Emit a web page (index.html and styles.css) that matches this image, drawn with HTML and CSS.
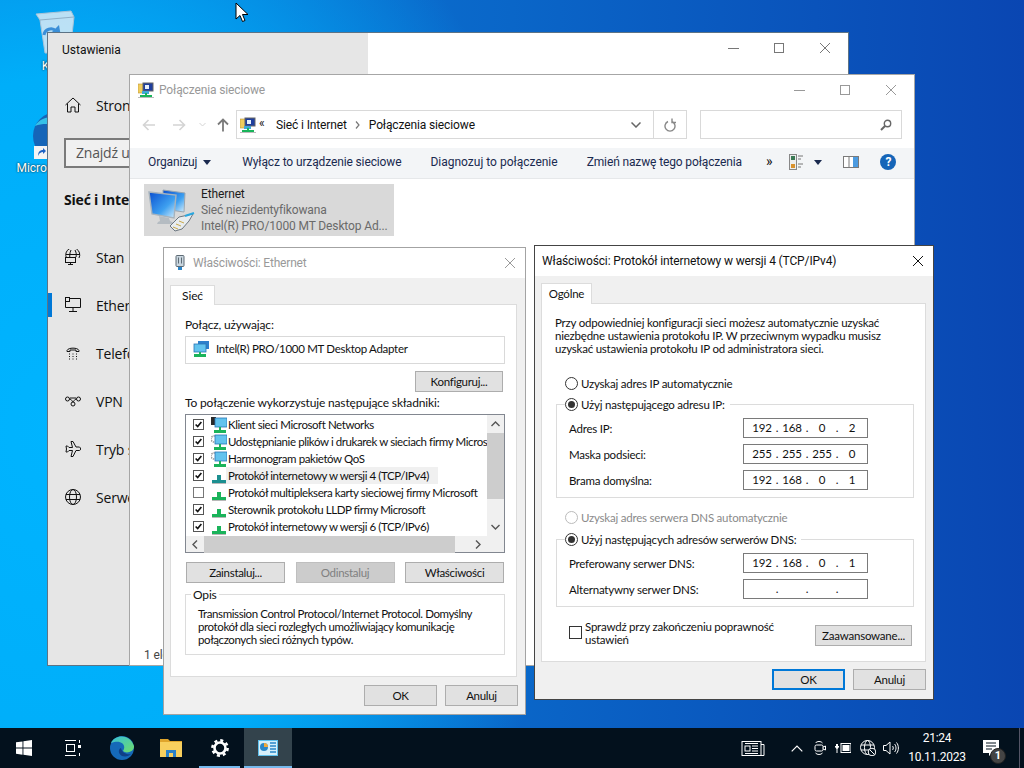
FILE: index.html
```html
<!DOCTYPE html>
<html lang="pl">
<head>
<meta charset="utf-8">
<title>Właściwości protokołu</title>
<link rel="stylesheet" href="styles.css">
</head>
<body>
<svg class="defs" width="0" height="0">
  <defs>
    <symbol id="netfolder" viewBox="0 0 16 16">
      <path d="M0 2h7l1 1v8H0z" fill="#f2cd5c" stroke="#b8933a" stroke-width=".6"/>
      <rect x="5" y="1" width="10" height="8" fill="#1f3f9e" stroke="#666" stroke-width="1"/>
      <rect x="7" y="3" width="4" height="4" fill="#e8f0fa"/>
      <rect x="4" y="9" width="7" height="3" fill="#3fa8d8"/>
      <rect x="7" y="11" width="2" height="2" fill="#18b45a"/>
      <rect x="2" y="13" width="12" height="2" fill="#18b45a"/>
      <rect x="0" y="15" width="16" height="1" fill="#bbb"/>
    </symbol>
    <symbol id="x" viewBox="0 0 12 12"><path d="M1 1l10 10M11 1L1 11" fill="none" stroke="currentColor" stroke-width="1"/></symbol>
    <symbol id="comp" viewBox="0 0 16 16">
      <rect x="5" y="0" width="11" height="8" fill="#2d80cc"/>
      <rect x="1" y="3" width="12" height="8" fill="#62c3ee" stroke="#2a76b5" stroke-width=".8"/>
      <rect x="6" y="11" width="2" height="2" fill="#1ab35a"/>
      <rect x="1" y="13" width="12" height="3" fill="#1ab35a"/>
    </symbol>
    <symbol id="client" viewBox="0 0 16 16">
      <rect x="0" y="0" width="5" height="8" fill="#2a2a2a"/>
      <rect x="4" y="1" width="12" height="9" fill="#62c3ee" stroke="#2a76b5" stroke-width=".8"/>
      <rect x="8" y="10" width="2" height="3" fill="#1ab35a"/>
      <rect x="3" y="13" width="12" height="3" fill="#1ab35a"/>
    </symbol>
    <symbol id="share" viewBox="0 0 16 16">
      <circle cx="3" cy="5" r="3" fill="none" stroke="#9a9a9a" stroke-width="1.6" stroke-dasharray="1.4 .8"/>
      <rect x="4" y="1" width="12" height="9" fill="#62c3ee" stroke="#2a76b5" stroke-width=".8"/>
      <rect x="8" y="10" width="2" height="3" fill="#1ab35a"/>
      <rect x="3" y="13" width="12" height="3" fill="#1ab35a"/>
    </symbol>
    <symbol id="proto" viewBox="0 0 16 16">
      <rect x="6" y="7" width="4" height="5" fill="#1ab35a"/>
      <rect x="1" y="12" width="14" height="3" fill="#1ab35a"/>
      <rect x="1" y="15" width="14" height="1" fill="#b8b8b8"/>
    </symbol>
    <symbol id="protoA" viewBox="0 0 16 16">
      <rect x="6" y="7" width="4" height="5" fill="#1c8f90"/>
      <rect x="1" y="12" width="14" height="3" fill="#1c8f90"/>
      <rect x="1" y="15" width="14" height="1" fill="#b8b8b8"/>
    </symbol>
    <symbol id="tick" viewBox="0 0 11 11"><path d="M2 5.5l2.5 2.5L9 2.5" fill="none" stroke="#111" stroke-width="2"/></symbol>
  </defs>
</svg>

<div class="desk-icon bin">
  <svg width="40" height="48" viewBox="0 0 40 48">
    <path d="M1 6L36 3l3 6-4 36H10L5 12z" fill="#dcebf5" fill-opacity=".85" stroke="#a9c4d8"/>
    <path d="M5 12l34-3" stroke="#8fb0c8" fill="none"/>
    <path d="M9 27a7 7 0 0 1 12-4l-3 2 6 1-1-6-2 2M24 32a7 7 0 0 1-11 2" fill="none" stroke="#3a8fd8" stroke-width="3"/>
  </svg>
  <span class="desk-label">Kosz</span>
</div>
<div class="desk-icon edge">
  <svg width="48" height="48" viewBox="0 0 48 48">
    <circle cx="24" cy="24" r="24" fill="#1565b8"/>
    <path d="M2 14C10 0 40 0 46 24c0 8-10 10-16 6 6-14-12-22-28-16z" fill="#35c1e8"/>
    <rect x="1" y="34" width="13" height="13" fill="#f4f4f4"/>
    <path d="M5 44c0-4 2-6 5-6V36l3 3-3 3v-2c-2 0-4 1-5 4z" fill="#1c62c4"/>
  </svg>
  <span class="desk-label">Microsoft Edge</span>
</div>

<section class="win settings">
  <div class="set-pane">
    <div class="set-title">Ustawienia</div>
    <div class="set-home">
      <svg class="set-ico" width="16" height="16" viewBox="0 0 16 16"><path d="M.5 8L8 1l7.5 7M2.500 6.500V15H6v-5h4v5h3.500V6.500" fill="none" stroke="#111" stroke-width="1"/></svg>
      <span>Strona główna</span>
    </div>
    <div class="set-search">Znajdź ustawienie</div>
    <h2 class="set-head">Sieć i Internet</h2>
    <nav class="set-nav">
      <div class="set-row"><i class="mark"></i>
        <svg class="set-ico" width="16" height="16" viewBox="0 0 16 16"><g fill="none" stroke="#111"><path d="M3 11A7 7 0 1 1 14 9"/><path d="M1 5.500h14M6 1c-1.500 3-1.500 7-1 9M10 1c1.500 3 1.500 5 1 7"/><rect x=".5" y="8.500" width="10" height="5" fill="#e6e6e6"/><path d="M3 15.500h5M5.500 13.500v2"/></g></svg>
        <span>Stan</span></div>
      <div class="set-row"><i class="mark on"></i>
        <svg class="set-ico" width="16" height="16" viewBox="0 0 16 16"><g fill="none" stroke="#111"><path d="M4.500 1.500h11v9H.5V5"/><rect x=".5" y=".5" width="4" height="4"/><path d="M8 10.500v4M4 14.500h8"/></g></svg>
        <span>Ethernet</span></div>
      <div class="set-row"><i class="mark"></i>
        <svg class="set-ico" width="16" height="16" viewBox="0 0 16 16"><path d="M2 6.500C1 2 15 2 14 6.500h-3V5H5v1.500z" fill="none" stroke="#111"/><path d="M4 9h1M7.500 9h1M11 9h1M4 11.500h1M7.500 11.500h1M11 11.500h1M4 14h1M7.500 14h1M11 14h1" stroke="#111"/></svg>
        <span>Telefoniczne</span></div>
      <div class="set-row"><i class="mark"></i>
        <svg class="set-ico" width="16" height="16" viewBox="0 0 16 16"><g fill="none" stroke="#111"><circle cx="2.500" cy="6" r="2"/><circle cx="13.500" cy="6" r="2"/><circle cx="8" cy="11" r="2"/><path d="M4.500 6C7 6 7 9 8 9M11.500 6C9 6 9 9 8 9M5 5h6"/></g></svg>
        <span>VPN</span></div>
      <div class="set-row"><i class="mark"></i>
        <svg class="set-ico" width="16" height="16" viewBox="0 0 16 16"><path d="M6 .5h2L11 6h3.500c1.500 1 1.500 3 0 3.500H11l-3 6H6l1.500-6H4L2.500 11H1l.5-3L1 5h1.500L4 6.500h3.500z" fill="none" stroke="#111"/></svg>
        <span>Tryb samolotowy</span></div>
      <div class="set-row"><i class="mark"></i>
        <svg class="set-ico" width="16" height="16" viewBox="0 0 16 16"><g fill="none" stroke="#111"><circle cx="8" cy="8" r="7.500"/><ellipse cx="8" cy="8" rx="3.500" ry="7.500"/><path d="M1 5.500h14M1 10.500h14"/></g></svg>
        <span>Serwer proxy</span></div>
    </nav>
  </div>
  <div class="set-main">
    <div class="caption-btns dark">
      <span class="cb"><i class="cb-min"></i></span>
      <span class="cb"><i class="cb-max"></i></span>
      <span class="cb"><svg width="12" height="12"><use href="#x"/></svg></span>
    </div>
  </div>
</section>

<section class="win conn">
  <header class="conn-title">
    <svg class="i16" width="16" height="16"><use href="#netfolder"/></svg>
    <span class="conn-title-text">Połączenia sieciowe</span>
    <div class="caption-btns">
      <span class="cb"><i class="cb-min"></i></span>
      <span class="cb"><i class="cb-max"></i></span>
      <span class="cb"><svg width="12" height="12"><use href="#x"/></svg></span>
    </div>
  </header>
  <div class="addr-row">
    <div class="nav-btns">
      <svg class="nb back" width="14" height="12" viewBox="0 0 14 12"><path d="M13 6H2M6.500 1L1.500 6l5 5" fill="none" stroke="#d4d4d4" stroke-width="1.600"/></svg>
      <svg class="nb fwd" width="14" height="12" viewBox="0 0 14 12"><path d="M1 6h11M7.500 1l5 5-5 5" fill="none" stroke="#d4d4d4" stroke-width="1.600"/></svg>
      <svg class="nb drop" width="7" height="5" viewBox="0 0 7 5"><path d="M.5 1L3.500 4l3-3" fill="none" stroke="#d4d4d4"/></svg>
      <svg class="nb up" width="12" height="14" viewBox="0 0 12 14"><path d="M6 13.500V2M1 6.500l5-5 5 5" fill="none" stroke="#7a7a7a" stroke-width="1.800"/></svg>
    </div>
    <div class="addr">
      <svg class="i16 addr-ico" width="16" height="16"><use href="#netfolder"/></svg>
      <span class="addr-lq">«</span>
      <span class="addr-crumb">Sieć i Internet</span>
      <svg class="addr-sep" width="5" height="8" viewBox="0 0 5 8"><path d="M1 .5L4 4 1 7.500" fill="none" stroke="#777" stroke-width="1.200"/></svg>
      <span class="addr-crumb">Połączenia sieciowe</span>
      <svg class="addr-chev" width="10" height="6" viewBox="0 0 10 6"><path d="M.5 .5L5 5 9.500 .5" fill="none" stroke="#666" stroke-width="1.500"/></svg>
      <span class="addr-refresh">
        <svg width="12" height="14" viewBox="0 0 12 14"><path d="M4 3.500a5 5 0 1 0 4 0M8 .5v4h4" fill="none" stroke="#888" stroke-width="1.400"/></svg>
      </span>
    </div>
    <div class="search">
      <svg width="12" height="12" viewBox="0 0 12 12"><circle cx="7.500" cy="4.500" r="3.200" fill="none" stroke="#666" stroke-width="1.400"/><path d="M5 7l-4 4" stroke="#666" stroke-width="2"/></svg>
    </div>
  </div>
  <div class="toolbar">
    <span class="tb t1">Organizuj</span>
    <i class="tri t1a"></i>
    <span class="tb t2">Wyłącz to urządzenie sieciowe</span>
    <span class="tb t3">Diagnozuj to połączenie</span>
    <span class="tb t4">Zmień nazwę tego połączenia</span>
    <span class="tb t5">»</span>
    <svg class="t6" width="15" height="16" viewBox="0 0 15 16"><rect x=".5" y=".5" width="7" height="15" fill="#eee" stroke="#888"/><rect x="2" y="2" width="4" height="4" fill="#3b7a55"/><rect x="2" y="10" width="4" height="4" fill="#d9922e"/><path d="M9 2h5M9 5h3M9 10h5M9 13h3" stroke="#777"/></svg>
    <i class="tri t7"></i>
    <svg class="t8" width="16" height="12" viewBox="0 0 16 12"><rect x=".5" y=".5" width="15" height="11" fill="#fff" stroke="#7a7a7a"/><rect x="10" y="1" width="5" height="10" fill="#4c9be0"/><path d="M6 1v10" stroke="#7a7a7a"/></svg>
    <span class="help">?</span>
  </div>
  <div class="conn-item">
    <svg class="big" width="48" height="46" viewBox="0 0 48 46">
      <defs>
        <linearGradient id="scr" x1="0" y1="0" x2="1" y2="1"><stop offset="0" stop-color="#0a4fd0"/><stop offset=".6" stop-color="#3ea0f0"/><stop offset="1" stop-color="#d9effc"/></linearGradient>
      </defs>
      <path d="M15 3l22 3-1 19-21-3z" fill="url(#scr)" stroke="#9aa7b2"/>
      <path d="M1 5l27 3-2 23L4 27z" fill="url(#scr)" stroke="#a7b3bd" stroke-width="1.400"/>
      <path d="M11 29l10 2 1 3 4 2-1 1H9l1-2 2-1z" fill="#b5bcc2"/>
      <path d="M22 39l9-9 14-3-4 7-7 8-7 2z" fill="#e8edf0" stroke="#6d7780"/>
      <path d="M25 40l5 2M28 37l5 2M31 34l5 2" stroke="#c9a94a"/>
      <path d="M37 29l9-3" stroke="#2aa8e0" stroke-width="2"/>
    </svg>
    <div class="conn-text">
      <div class="conn-name">Ethernet</div>
      <div class="conn-sub">Sieć niezidentyfikowana</div>
      <div class="conn-sub">Intel(R) PRO/1000 MT Desktop Ad...</div>
    </div>
  </div>
  <div class="conn-status">1 element</div>
</section>

<section class="win dlg props">
  <header class="dlg-title">
    <svg class="plug" width="10" height="16" viewBox="0 0 10 16"><rect x="1" y="0.500" width="8" height="11" rx="1" fill="#c9d6df" stroke="#5e6b75"/><path d="M3.500 2.500v6M6.500 2.500v6" stroke="#5e6b75"/><rect x="3" y="12" width="4" height="3" fill="#2a84c8"/></svg>
    <span class="dlg-title-text dim">Właściwości: Ethernet</span>
    <svg class="dlg-x dim" width="12" height="12"><use href="#x"/></svg>
  </header>
  <div class="tabs"><span class="tab tab-a">Sieć</span></div>
  <div class="panel panel-a">
    <div class="lbl-1">Połącz, używając:</div>
    <div class="adapter">
      <svg width="16" height="16"><use href="#comp"/></svg>
      <span>Intel(R) PRO/1000 MT Desktop Adapter</span>
    </div>
    <button class="btn cfg">Konfiguruj...</button>
    <div class="lbl-2">To połączenie wykorzystuje następujące składniki:</div>
    <div class="list">
      <div class="list-top">
        <ul class="rows">
          <li class="row"><span class="chk on"><svg width="11" height="11"><use href="#tick"/></svg></span><svg width="16" height="16"><use href="#client"/></svg><span class="row-t">Klient sieci Microsoft Networks</span></li>
          <li class="row"><span class="chk on"><svg width="11" height="11"><use href="#tick"/></svg></span><svg width="16" height="16"><use href="#share"/></svg><span class="row-t">Udostępnianie plików i drukarek w sieciach firmy Microsoft</span></li>
          <li class="row"><span class="chk on"><svg width="11" height="11"><use href="#tick"/></svg></span><svg width="16" height="16"><use href="#share"/></svg><span class="row-t">Harmonogram pakietów QoS</span></li>
          <li class="row"><span class="chk on"><svg width="11" height="11"><use href="#tick"/></svg></span><svg width="16" height="16"><use href="#protoA"/></svg><span class="row-t sel">Protokół internetowy w wersji 4 (TCP/IPv4)</span></li>
          <li class="row"><span class="chk"></span><svg width="16" height="16"><use href="#proto"/></svg><span class="row-t">Protokół multipleksera karty sieciowej firmy Microsoft</span></li>
          <li class="row"><span class="chk on"><svg width="11" height="11"><use href="#tick"/></svg></span><svg width="16" height="16"><use href="#proto"/></svg><span class="row-t">Sterownik protokołu LLDP firmy Microsoft</span></li>
          <li class="row"><span class="chk on"><svg width="11" height="11"><use href="#tick"/></svg></span><svg width="16" height="16"><use href="#proto"/></svg><span class="row-t">Protokół internetowy w wersji 6 (TCP/IPv6)</span></li>
        </ul>
        <div class="vbar">
          <svg width="9" height="6" viewBox="0 0 9 6"><path d="M.5 5L4.500 1l4 4" fill="none" stroke="#555" stroke-width="1.400"/></svg>
          <div class="vthumb"></div>
          <svg width="9" height="6" viewBox="0 0 9 6"><path d="M.5 1l4 4 4-4" fill="none" stroke="#555" stroke-width="1.400"/></svg>
        </div>
      </div>
      <div class="hbar">
        <svg width="6" height="9" viewBox="0 0 6 9"><path d="M5 .5l-4 4 4 4" fill="none" stroke="#555" stroke-width="1.400"/></svg>
        <div class="hthumb"></div>
        <svg width="6" height="9" viewBox="0 0 6 9"><path d="M1 .5l4 4-4 4" fill="none" stroke="#555" stroke-width="1.400"/></svg>
      </div>
    </div>
    <div class="btn-row">
      <button class="btn b99">Zainstaluj...</button>
      <button class="btn b99 disabled">Odinstaluj</button>
      <button class="btn b99">Właściwości</button>
    </div>
    <fieldset class="opis">
      <legend>Opis</legend>
      <p>Transmission Control Protocol/Internet Protocol. Domyślny<br>protokół dla sieci rozległych umożliwiający komunikację<br>połączonych sieci różnych typów.</p>
    </fieldset>
  </div>
  <div class="dlg-foot">
    <button class="btn b73">OK</button>
    <button class="btn b73">Anuluj</button>
  </div>
</section>

<section class="win dlg ipv4">
  <header class="dlg-title">
    <span class="dlg-title-text">Właściwości: Protokół internetowy w wersji 4 (TCP/IPv4)</span>
    <svg class="dlg-x" width="12" height="12"><use href="#x"/></svg>
  </header>
  <div class="tabs"><span class="tab tab-b">Ogólne</span></div>
  <div class="panel panel-b">
    <p class="intro">Przy odpowiedniej konfiguracji sieci możesz automatycznie uzyskać<br>niezbędne ustawienia protokołu IP. W przeciwnym wypadku musisz<br>uzyskać ustawienia protokołu IP od administratora sieci.</p>
    <label class="radio r-auto"><i class="rd"></i>Uzyskaj adres IP automatycznie</label>
    <fieldset class="grp g1">
      <legend><label class="radio"><i class="rd on"></i>Użyj następującego adresu IP:</label></legend>
      <div class="ip-grid">
        <span>Adres IP:</span><div class="ip"><b>192</b><u>.</u><b>168</b><u>.</u><b>0</b><u>.</u><b>2</b></div>
        <span>Maska podsieci:</span><div class="ip"><b>255</b><u>.</u><b>255</b><u>.</u><b>255</b><u>.</u><b>0</b></div>
        <span>Brama domyślna:</span><div class="ip"><b>192</b><u>.</u><b>168</b><u>.</u><b>0</b><u>.</u><b>1</b></div>
      </div>
    </fieldset>
    <label class="radio r-dns off"><i class="rd"></i>Uzyskaj adres serwera DNS automatycznie</label>
    <fieldset class="grp g2">
      <legend><label class="radio"><i class="rd on"></i>Użyj następujących adresów serwerów DNS:</label></legend>
      <div class="ip-grid">
        <span>Preferowany serwer DNS:</span><div class="ip"><b>192</b><u>.</u><b>168</b><u>.</u><b>0</b><u>.</u><b>1</b></div>
        <span>Alternatywny serwer DNS:</span><div class="ip"><b></b><u>.</u><b></b><u>.</u><b></b><u>.</u><b></b></div>
      </div>
    </fieldset>
    <div class="verify">
      <i class="vbox"></i>
      <span class="vtext">Sprawdź przy zakończeniu poprawność<br>ustawień</span>
      <button class="btn adv">Zaawansowane...</button>
    </div>
  </div>
  <div class="dlg-foot foot-b">
    <button class="btn b73 def">OK</button>
    <button class="btn b73">Anuluj</button>
  </div>
</section>

<svg class="cursor" width="14" height="21" viewBox="0 0 14 21"><path d="M1 1v16l4-3.500 2.500 6 2.500-1-2.500-6H13z" fill="#fff" stroke="#000"/></svg>

<footer class="taskbar">
  <span class="tk tk-start"><svg width="16" height="16" viewBox="0 0 16 16"><path d="M0 2.300l6.500-.9v6.200H0zM7.400 1.300L16 0v7.600H7.400zM0 8.500h6.500v6.200L0 13.700zM7.400 8.500H16V16l-8.600-1.200z" fill="#fff"/></svg></span>
  <span class="tk"><svg width="16" height="16" viewBox="0 0 16 16"><g fill="none" stroke="#fff"><path d="M0 .5h11M0 15.500h11"/><rect x="1.500" y="4.500" width="8" height="7"/><path d="M14.500 0v3M14.500 13v3"/></g><rect x="13" y="5" width="3" height="3" fill="#fff"/></svg></span>
  <span class="tk tk-edge"><svg width="24" height="24" viewBox="0 0 24 24"><defs><linearGradient id="eg" x1="0" y1="0" x2="1" y2="1"><stop offset="0" stop-color="#37c0d8"/><stop offset="1" stop-color="#6fdc6a"/></linearGradient></defs><circle cx="12" cy="12" r="12" fill="#1569b8"/><path d="M1 7C5-2 20-2 24 10c.5 6-8 8-11 5 4-6-2-12-12-8z" fill="url(#eg)"/><path d="M11 12c-3 1-3 6 1 8 4 1 7 0 9-2-4 1-9-1-10-6z" fill="#0f3f86"/></svg></span>
  <span class="tk"><svg width="22" height="20" viewBox="0 0 22 20"><path d="M0 1h8l2 2h12v4H0z" fill="#e0a52c"/><rect x="0" y="4" width="22" height="15" fill="#f8cf5e"/><rect x="6" y="12" width="10" height="7" fill="#2a80c8"/><rect x="9" y="15" width="4" height="4" fill="#f8cf5e"/></svg></span>
  <span class="tk tk-line"><svg width="18" height="18" viewBox="0 0 18 18"><circle cx="9" cy="9" r="5.500" fill="none" stroke="#fff" stroke-width="2.600"/><circle cx="9" cy="9" r="7.600" fill="none" stroke="#fff" stroke-width="2.600" stroke-dasharray="3 2.970"/></svg></span>
  <span class="tk tk-act"><svg width="20" height="16" viewBox="0 0 20 16"><rect width="20" height="16" fill="#5fc0ec"/><rect x="1" y="1" width="18" height="14" fill="#d6effa"/><circle cx="6" cy="7" r="4" fill="#2a86c8"/><path d="M6 7V3a4 4 0 0 1 4 4z" fill="#f2a93b"/><path d="M12 3h6M12 6h6M12 9h6M12 12h6" stroke="#2a86c8" stroke-width="1.500"/></svg></span>
  <div class="tray">
    <svg class="tr tr-news" width="24" height="15" viewBox="0 0 24 15"><g fill="none" stroke="#fff"><rect x="1" y=".5" width="19" height="14"/><path d="M20 3.500h3v11H3"/><rect x="4" y="5" width="5" height="5"/></g><path d="M4 2.500h13M11 5h6M11 7.500h6M11 10h6M4 12.500h13" stroke="#fff"/></svg>
    <svg class="tr tr-chev" width="12" height="7" viewBox="0 0 12 7"><path d="M.7 6.300L6 1l5.300 5.300" fill="none" stroke="#fff" stroke-width="1.200"/></svg>
    <svg class="tr tr-meet" width="12" height="16" viewBox="0 0 12 16"><g fill="none" stroke="#fff"><path d="M1.500 3C3 1 7 1 8.500 3M1.500 13C3 15 7 15 8.500 13"/><rect x="1" y="5" width="8" height="6" rx="1.500"/><path d="M9 7l2.500-1v4L9 9"/></g></svg>
    <svg class="tr tr-bat" width="16" height="12" viewBox="0 0 16 12"><g fill="#fff"><rect x="6" y="1.500" width="10" height="9" fill="none" stroke="#fff"/><rect x="7.500" y="3" width="7" height="6"/><path d="M1 2v2H0v1l1.500 2v4h1V7L4 5V4H3V2z"/></g></svg>
    <svg class="tr tr-net" width="16" height="16" viewBox="0 0 16 16"><g fill="none" stroke="#fff"><circle cx="7.500" cy="7.500" r="7"/><ellipse cx="7.500" cy="7.500" rx="3" ry="7"/><path d="M1 5h13M1 10h13"/></g><circle cx="12" cy="12" r="3.800" fill="#03111d" stroke="#fff"/><path d="M9.500 9.500l5 5" stroke="#fff"/></svg>
    <svg class="tr tr-vol" width="16" height="14" viewBox="0 0 16 14"><g fill="none" stroke="#fff"><path d="M.5 4.500h2.500L7 1v12L3 9.500H.5z"/><path d="M9.500 5c1 1 1 3 0 4M11.500 3c2 2 2 6 0 8M13.500 1.500c2.500 3 2.500 8 0 11"/></g></svg>
    <div class="clock"><span>21:24</span><span>10.11.2023</span></div>
    <span class="notif">
      <svg width="16" height="17" viewBox="0 0 16 17"><path d="M0 0h16v13H9l-3 3v-3H0z" fill="#fff"/><path d="M3 3h10M3 6h10M3 9h6" stroke="#03111d"/></svg>
      <b class="badge">1</b>
    </span>
    <i class="peek"></i>
  </div>
</footer>
</body>
</html>
```

FILE: styles.css
```css
* { box-sizing: border-box; }
html, body { margin: 0; height: 100%; }
body {
  position: relative;
  width: 1024px;
  height: 768px;
  overflow: hidden;
  font-family: "Roboto", "Liberation Sans", sans-serif;
  font-size: 12px;
  color: #111;
  background:
    radial-gradient(ellipse 520px 640px at 60px 430px, #00b4ff 0%, #00aef9 55%, rgba(0, 160, 240, 0) 100%),
    linear-gradient(90deg, #0a7fdc 0%, #0a66c8 50%, #0a46b2 100%);
}
.defs { position: absolute; }
ul { list-style: none; margin: 0; padding: 0; }
p { margin: 0; }
i { display: block; }

/* desktop */
.desk-icon { position: absolute; display: flex; flex-direction: column; align-items: center; width: 76px; color: #fff; font-size: 12px; text-shadow: 0 0 2px #000; }
.desk-label { white-space: nowrap; }
.bin { left: 17px; top: 8px; gap: 3px; }
.edge { left: 19px; top: 112px; gap: 1px; }
.cursor { position: absolute; left: 235px; top: 2px; }

/* windows */
.win { position: absolute; }
.cb { display: flex; width: 46px; height: 30px; align-items: center; justify-content: center; }
.caption-btns { display: flex; margin-left: auto; color: #999; }
.caption-btns.dark { color: #777; }
.cb-min { width: 11px; height: 1px; background: currentColor; }
.cb-max { width: 10px; height: 10px; border: 1px solid currentColor; }

/* settings */
.settings { left: 47px; top: 32px; width: 802px; height: 634px; border: 1px solid #5d7385; display: flex; background: #fff; }
.set-pane { width: 320px; background: #e6e6e6; font-family: "Open Sans", sans-serif; font-size: 14px; letter-spacing: -.2px; overflow: hidden; white-space: nowrap; }
.set-title { font-family: "Roboto", sans-serif; font-size: 12px; line-height: 16px; padding: 9px 0 0 14px; height: 32px; letter-spacing: 0; }
.set-home { display: flex; align-items: center; gap: 15px; height: 48px; margin-top: 16px; padding-left: 17px; }
.set-search { width: 66px; height: 30px; margin: 9px 0 0 16px; overflow: hidden; border: 2px solid #7a7a7a; border-right: 0; background: #f0f0f0; padding-left: 10px; line-height: 26px; font-size: 14px; color: #555; }
.set-head { margin: 22px 0 0 16px; font-size: 14px; line-height: 20px; font-weight: 700; }
.set-nav { margin-top: 23px; }
.set-row { display: flex; align-items: center; height: 48px; }
.mark { width: 4px; height: 24px; margin-right: 13px; }
.mark.on { background: #0078d7; }
.set-ico { flex: none; }
.set-row span { margin-left: 15px; }
.set-main { flex: 1; display: flex; align-items: flex-start; }

/* connections */
.conn { left: 129px; top: 74px; width: 786px; height: 592px; border: 1px solid #a6a6a6; background: #fff; display: flex; flex-direction: column; letter-spacing: -.13px; }
.conn-title { display: flex; align-items: center; height: 30px; padding-left: 8px; }
.conn-title-text { margin-left: 5px; color: #999; font-size: 12px; }
.addr-row { display: flex; height: 29px; margin-top: 5px; }
.nav-btns { display: flex; align-items: center; width: 106px; }
.nb { flex: none; }
.back { margin-left: 12px; }
.fwd { margin-left: 16px; }
.drop { margin-left: 13px; }
.up { margin-left: 11px; }
.addr { display: flex; align-items: center; width: 451px; border: 1px solid #d9d9d9; font-size: 12px; }
.addr-ico { margin-left: 3px; }
.addr-lq { margin-left: 3px; width: 17px; line-height: 12px; height: 16px; }
.addr-sep { margin: 0 9px 0 8px; }
.addr-chev { margin-left: auto; margin-right: 12px; }
.addr-refresh { display: flex; align-items: center; justify-content: center; width: 33px; height: 100%; border-left: 1px solid #d9d9d9; }
.search { display: flex; align-items: center; justify-content: flex-end; width: 202px; margin-left: 13px; padding-right: 9px; border: 1px solid #d9d9d9; }
.toolbar { display: flex; align-items: center; height: 31px; margin-top: 9px; padding-bottom: 2px; background: #f3f5f7; border-bottom: 1px solid #e6e8ea; color: #1a2a4f; white-space: nowrap; }
.tri { width: 0; height: 0; border-left: 4px solid transparent; border-right: 4px solid transparent; border-top: 5px solid #1a2a4f; }
.t1 { margin-left: 18px; }
.t1a { margin-left: 6px; }
.t2 { margin-left: 31px; }
.t3 { margin-left: 29px; letter-spacing: 0; }
.t4 { margin-left: 29px; }
.t5 { margin-left: 24px; font-size: 14px; line-height: 14px; margin-top: -2px; color: #111; }
.t6 { margin-left: 17px; }
.t7 { margin-left: 10px; }
.t8 { margin-left: 21px; }
.help { display: flex; align-items: center; justify-content: center; width: 16px; height: 16px; margin-left: 21px; border-radius: 50%; background: #1565b8; color: #fff; font-weight: 700; font-size: 12px; }
.conn-item { display: flex; align-items: center; width: 250px; height: 52px; margin: 5px 0 0 14px; background: #d9d9d9; padding-left: 4px; }
.conn-text { margin-left: 5px; white-space: nowrap; }
.conn-name { line-height: 16px; color: #1c1c1c; }
.conn-sub { line-height: 16px; color: #6a6a6a; }
.conn-status { margin: auto 0 2px 14px; line-height: 16px; color: #444; }

/* dialogs */
.dlg { background: #f0f0f0; display: flex; flex-direction: column; font-family: "Lato", "Roboto", sans-serif; }
.dlg-title { display: flex; flex: none; align-items: center; height: 30px; background: #fff; font-family: "Roboto", sans-serif; letter-spacing: -.13px; }
.dlg-title-text { font-size: 12px; }
.dim { color: #999; }
.dlg-x { margin-left: auto; margin-right: 9px; color: #111; }
.dlg-x.dim { color: #999; }
.tabs { display: flex; margin: 7px 0 -1px 6px; }
.tab { position: relative; z-index: 1; display: flex; align-items: center; justify-content: center; background: #fff; border: 1px solid #dcdcdc; border-bottom: 0; }
.panel { flex: none; margin-left: 6px; background: #fff; border: 1px solid #dcdcdc; }
.btn { display: block; padding: 0; margin: 0; height: 21px; border: 1px solid #adadad; background: #e1e1e1; font: inherit; letter-spacing: inherit; color: #111; text-align: center; }
.btn.disabled { background: #ccc; border-color: #bfbfbf; color: #808080; }
.b73 { width: 73px; }
.b99 { width: 99px; }
.dlg-foot { display: flex; justify-content: flex-end; gap: 8px; }

/* properties dialog */
.props { left: 163px; top: 247px; width: 363px; height: 468px; border: 1px solid #a3a3a3; font-size: 12px; letter-spacing: -.16px; }
.props .dlg-title { padding-left: 11px; }
.props .dlg-title-text { margin-left: 8px; letter-spacing: -.2px; }
.props .btn { font-size: 11.500px; letter-spacing: -.3px; }
.tab-a { width: 45px; height: 20px; }
.panel-a { width: 347px; height: 373px; padding: 12px 0 0 14px; }
.lbl-1 { line-height: 15px; }
.adapter { display: flex; align-items: center; gap: 7px; width: 320px; height: 28px; margin-top: 4px; padding: 0 0 3px 7px; border: 1px solid #d9d9d9; font-size: 11.500px; letter-spacing: -.3px; }
.cfg { width: 88px; margin: 7px 0 0 230px; }
.lbl-2 { margin-top: 3px; line-height: 15px; }
.list { width: 320px; height: 139px; margin-top: 4px; border: 1px solid #828790; background: #f0f0f0; display: flex; flex-direction: column; }
.list-top { display: flex; height: 121px; }
.rows { width: 301px; height: 121px; padding-top: 1px; overflow: hidden; background: #fff; font-size: 11.500px; letter-spacing: -.41px; }
.row { display: flex; align-items: center; height: 17px; white-space: nowrap; }
.row > svg { flex: none; }
.chk { display: flex; flex: none; align-items: center; justify-content: center; width: 11px; height: 11px; margin: 0 7px; background: #fff; border: 1px solid #777; }
.chk.on { border-color: #555; }
.row-t { margin-left: 1px; padding: 0 2px 0 0; line-height: 17px; }
.row-t.sel { background: #f0f0f0; width: 212px; margin-left: -1px; padding-left: 2px; }
.vbar { width: 17px; display: flex; flex-direction: column; align-items: center; }
.vbar svg { margin: 6px 0; }
.vthumb { width: 17px; height: 66px; background: #cdcdcd; margin-top: 0; }
.vbar svg:last-child { margin-top: auto; }
.hbar { display: flex; align-items: center; height: 17px; }
.hbar svg { margin: 0 6px; flex: none; }
.hthumb { width: 251px; height: 17px; background: #cdcdcd; margin-left: 0; }
.hbar svg:first-child { margin-right: 6px; }
.hbar svg:last-child { margin-left: 20px; }
.btn-row { display: flex; justify-content: space-between; width: 318px; margin: 9px 0 0 1px; }
.opis { width: 320px; height: 68px; margin: 4px 0 0; padding: 5px 0 0 12px; border: 1px solid #dcdcdc; min-width: 0; }
.opis legend { padding: 0 2px; margin-left: -7px; line-height: 15px; }
.opis p { line-height: 13px; font-size: 11.500px; letter-spacing: -.41px; }
.props .dlg-foot { margin-top: 8px; padding-right: 7px; }

/* ipv4 dialog */
.ipv4 { left: 534px; top: 245px; width: 400px; height: 455px; border: 1px solid #444; font-size: 11.500px; letter-spacing: -.22px; }
.ipv4 .dlg-title { padding-left: 7px; }
.tab-b { width: 51px; height: 21px; padding-bottom: 2px; }
.panel-b { width: 385px; height: 359px; padding: 13px 0 0 14px; }
.intro { margin: -1px 0 1px -1px; line-height: 13px; }
.radio { display: flex; align-items: center; gap: 3px; height: 15px; line-height: 15px; white-space: nowrap; }
.rd { position: relative; width: 13px; height: 13px; border: 1px solid #333; border-radius: 50%; background: #fff; flex: none; }
.rd.on::after { content: ""; position: absolute; left: 2px; top: 2px; width: 7px; height: 7px; border-radius: 50%; background: #333; }
.r-auto { margin: 21px 0 0 9px; }
.grp { width: 358px; margin: 6px 0 0; padding: 0 0 0 12px; border: 1px solid #dcdcdc; min-width: 0; }
.grp legend { padding: 0 5px 0 0; margin-left: -4px; }
.g1 { height: 101px; }
.g2 { height: 75px; margin-top: 7px; }
.ip-grid { display: grid; grid-template-columns: 174px 125px; grid-auto-rows: 20px; row-gap: 6px; align-items: center; padding-top: 6px; }
.ip { display: grid; grid-template-columns: 24px 6px 24px 6px 24px 6px 24px; align-items: center; height: 20px; border: 1px solid #7a7a7a; padding-left: 6px; background: #fff; line-height: 18px; }
.ip b { font-weight: 400; text-align: center; }
.ip u { text-decoration: none; text-align: center; }
.r-dns { margin: 12px 0 0 9px; }
.off { color: #8a8a8a; }
.off .rd { border-color: #bbb; }
.verify { display: flex; align-items: flex-start; width: 358px; height: 26px; margin-top: 13px; padding: 0 2px 0 13px; }
.vbox { flex: none; width: 13px; height: 13px; margin-top: 6px; border: 1px solid #333; background: #fff; }
.vtext { margin-left: 3px; line-height: 13px; }
.adv { width: 97px; margin: 5px 0 0 auto; }
.foot-b { margin-top: 7px; padding-right: 7px; }
.def { border: 2px solid #0078d7; }

/* taskbar */
.taskbar { position: absolute; left: 0; right: 0; bottom: 0; height: 40px; display: flex; background: #03111d; color: #fff; }
.tk { display: flex; align-items: center; justify-content: center; position: relative; width: 49px; height: 40px; flex: none; }
.tk-start { width: 48px; }
.tk-line::after, .tk-act::after { content: ""; position: absolute; bottom: 0; height: 2px; background: #76b9ed; }
.tk-line::after { left: 4px; right: 4px; }
.tk-act { background: #33434c; width: 48px; }
.tk-act::after { left: 0; right: 0; }
.tray { display: flex; align-items: center; margin-left: auto; height: 40px; }
.tr { flex: none; }
.tr-chev { margin-left: 26px; }
.tr-meet { margin-left: 11px; }
.tr-bat { margin-left: 9px; }
.tr-net { margin-left: 9px; }
.tr-vol { margin-left: 7px; }
.clock { display: flex; flex-direction: column; align-items: center; width: 66px; margin-left: 5px; font-size: 12px; line-height: 19px; letter-spacing: -.3px; }
.notif { position: relative; display: flex; align-items: center; justify-content: center; width: 40px; height: 40px; margin-left: 9px; padding-right: 16px; }
.badge { position: absolute; left: 11px; top: 20px; width: 16px; height: 16px; border-radius: 50%; background: #444; border: 1px solid #222; font-size: 11px; line-height: 14px; font-weight: 700; text-align: center; }
.peek { width: 5px; height: 40px; border-left: 1px solid #556; margin-left: 0; }
```
